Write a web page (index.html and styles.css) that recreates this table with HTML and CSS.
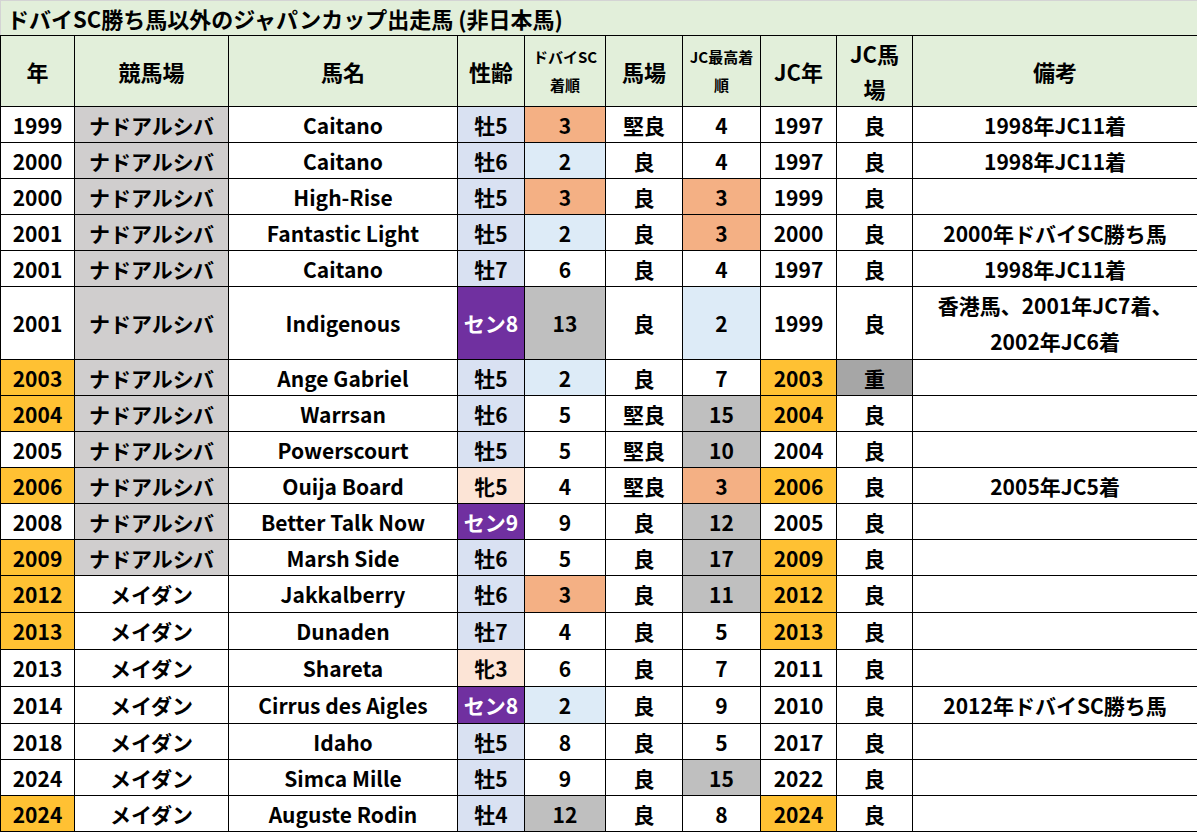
FILE: index.html
```html
<!DOCTYPE html>
<html lang="ja">
<head>
<meta charset="utf-8">
<title>ドバイSC勝ち馬以外のジャパンカップ出走馬</title>
<link rel="stylesheet" href="styles.css">
</head>
<body>
<table class="sheet">
  <colgroup>
    <col class="c-year"><col class="c-venue"><col class="c-name"><col class="c-age"><col class="c-dsc"><col class="c-going"><col class="c-jcbest"><col class="c-jcyear"><col class="c-jcgoing"><col class="c-note">
  </colgroup>
  <thead>
    <tr class="title-row"><th colspan="10" class="title">ドバイSC勝ち馬以外のジャパンカップ出走馬 (非日本馬)</th></tr>
    <tr class="head-row">
      <th>年</th><th>競馬場</th><th>馬名</th><th>性齢</th>
      <th class="small">ドバイSC<br>着順</th>
      <th>馬場</th>
      <th class="small">JC最高着<br>順</th>
      <th>JC年</th>
      <th class="two">JC馬<br>場</th>
      <th>備考</th>
    </tr>
  </thead>
  <tbody>
    <tr><td>1999</td><td class="nad">ナドアルシバ</td><td>Caitano</td><td class="m">牡5</td><td class="p3">3</td><td>堅良</td><td>4</td><td>1997</td><td>良</td><td>1998年JC11着</td></tr>
    <tr><td>2000</td><td class="nad">ナドアルシバ</td><td>Caitano</td><td class="m">牡6</td><td class="p2">2</td><td>良</td><td>4</td><td>1997</td><td>良</td><td>1998年JC11着</td></tr>
    <tr><td>2000</td><td class="nad">ナドアルシバ</td><td>High-Rise</td><td class="m">牡5</td><td class="p3">3</td><td>良</td><td class="p3">3</td><td>1999</td><td>良</td><td></td></tr>
    <tr><td>2001</td><td class="nad">ナドアルシバ</td><td>Fantastic Light</td><td class="m">牡5</td><td class="p2">2</td><td>良</td><td class="p3">3</td><td>2000</td><td>良</td><td>2000年ドバイSC勝ち馬</td></tr>
    <tr><td>2001</td><td class="nad">ナドアルシバ</td><td>Caitano</td><td class="m">牡7</td><td>6</td><td>良</td><td>4</td><td>1997</td><td>良</td><td>1998年JC11着</td></tr>
    <tr class="tall"><td>2001</td><td class="nad">ナドアルシバ</td><td>Indigenous</td><td class="g">セン8</td><td class="pl">13</td><td>良</td><td class="p2">2</td><td>1999</td><td>良</td><td class="note2">香港馬、2001年JC7着、<br>2002年JC6着</td></tr>
    <tr><td class="gold">2003</td><td class="nad">ナドアルシバ</td><td>Ange Gabriel</td><td class="m">牡5</td><td class="p2">2</td><td>良</td><td>7</td><td class="gold">2003</td><td class="heavy">重</td><td></td></tr>
    <tr><td class="gold">2004</td><td class="nad">ナドアルシバ</td><td>Warrsan</td><td class="m">牡6</td><td>5</td><td>堅良</td><td class="pl">15</td><td class="gold">2004</td><td>良</td><td></td></tr>
    <tr><td>2005</td><td class="nad">ナドアルシバ</td><td>Powerscourt</td><td class="m">牡5</td><td>5</td><td>堅良</td><td class="pl">10</td><td>2004</td><td>良</td><td></td></tr>
    <tr><td class="gold">2006</td><td class="nad">ナドアルシバ</td><td>Ouija Board</td><td class="f">牝5</td><td>4</td><td>堅良</td><td class="p3">3</td><td class="gold">2006</td><td>良</td><td>2005年JC5着</td></tr>
    <tr><td>2008</td><td class="nad">ナドアルシバ</td><td>Better Talk Now</td><td class="g">セン9</td><td>9</td><td>良</td><td class="pl">12</td><td>2005</td><td>良</td><td></td></tr>
    <tr><td class="gold">2009</td><td class="nad">ナドアルシバ</td><td>Marsh Side</td><td class="m">牡6</td><td>5</td><td>良</td><td class="pl">17</td><td class="gold">2009</td><td>良</td><td></td></tr>
    <tr class="r37"><td class="gold">2012</td><td>メイダン</td><td>Jakkalberry</td><td class="m">牡6</td><td class="p3">3</td><td>良</td><td class="pl">11</td><td class="gold">2012</td><td>良</td><td></td></tr>
    <tr class="r37"><td class="gold">2013</td><td>メイダン</td><td>Dunaden</td><td class="m">牡7</td><td>4</td><td>良</td><td>5</td><td class="gold">2013</td><td>良</td><td></td></tr>
    <tr class="r37"><td>2013</td><td>メイダン</td><td>Shareta</td><td class="f">牝3</td><td>6</td><td>良</td><td>7</td><td>2011</td><td>良</td><td></td></tr>
    <tr class="r37"><td>2014</td><td>メイダン</td><td>Cirrus des Aigles</td><td class="g">セン8</td><td class="p2">2</td><td>良</td><td>9</td><td>2010</td><td>良</td><td>2012年ドバイSC勝ち馬</td></tr>
    <tr><td>2018</td><td>メイダン</td><td>Idaho</td><td class="m">牡5</td><td>8</td><td>良</td><td>5</td><td>2017</td><td>良</td><td></td></tr>
    <tr><td>2024</td><td>メイダン</td><td>Simca Mille</td><td class="m">牡5</td><td>9</td><td>良</td><td class="pl">15</td><td>2022</td><td>良</td><td></td></tr>
    <tr><td class="gold">2024</td><td>メイダン</td><td>Auguste Rodin</td><td class="m">牡4</td><td class="pl">12</td><td>良</td><td>8</td><td class="gold">2024</td><td>良</td><td></td></tr>
  </tbody>
</table>
</body>
</html>
```

FILE: styles.css
```css
html, body {
  margin: 0;
  padding: 0;
  background: #ffffff;
}

body {
  font-family: "Noto Sans CJK JP", "Noto Sans", sans-serif;
  font-weight: 700;
  color: #000;
}

.sheet {
  border-collapse: collapse;
  table-layout: fixed;
  width: 1197px;
  border-left: 1px solid #d4d4d4;
}

.c-year { width: 74px; }
.c-venue { width: 154px; }
.c-name { width: 229px; }
.c-age { width: 67px; }
.c-dsc { width: 81px; }
.c-going { width: 77px; }
.c-jcbest { width: 78px; }
.c-jcyear { width: 76px; }
.c-jcgoing { width: 76px; }
.c-note { width: 285px; }

.sheet th,
.sheet td {
  border: 1px solid #000;
  padding: 0;
  text-align: center;
  vertical-align: middle;
  font-size: 21px;
  line-height: 26px;
  white-space: nowrap;
  overflow: hidden;
}

.title-row { height: 35px; }

.sheet th.title {
  background: #e2efda;
  text-align: left;
  padding-left: 6px;
  font-size: 22px;
  border-top: 1px solid #d4d4d4;
  border-left: none;
}

.head-row { height: 69px; }

.head-row th {
  background: #e2efda;
  font-size: 22px;
}

.head-row th.small {
  font-size: 15px;
  line-height: 28px;
}

.head-row th.two {
  line-height: 35px;
}

tbody tr { height: 36px; }
tbody tr.r37 { height: 37px; }
tbody tr.tall { height: 72px; }

.note2 { line-height: 36px !important; }

.nad { background: #d0cece; }
.gold { background: #ffc133; }
.m { background: #d9e1f2; }
.f { background: #fce4d6; }
.g { background: #7030a0; color: #fff; }
.p3 { background: #f4b084; }
.p2 { background: #ddebf7; }
.pl { background: #bfbfbf; }
.heavy { background: #a6a6a6; }
```
